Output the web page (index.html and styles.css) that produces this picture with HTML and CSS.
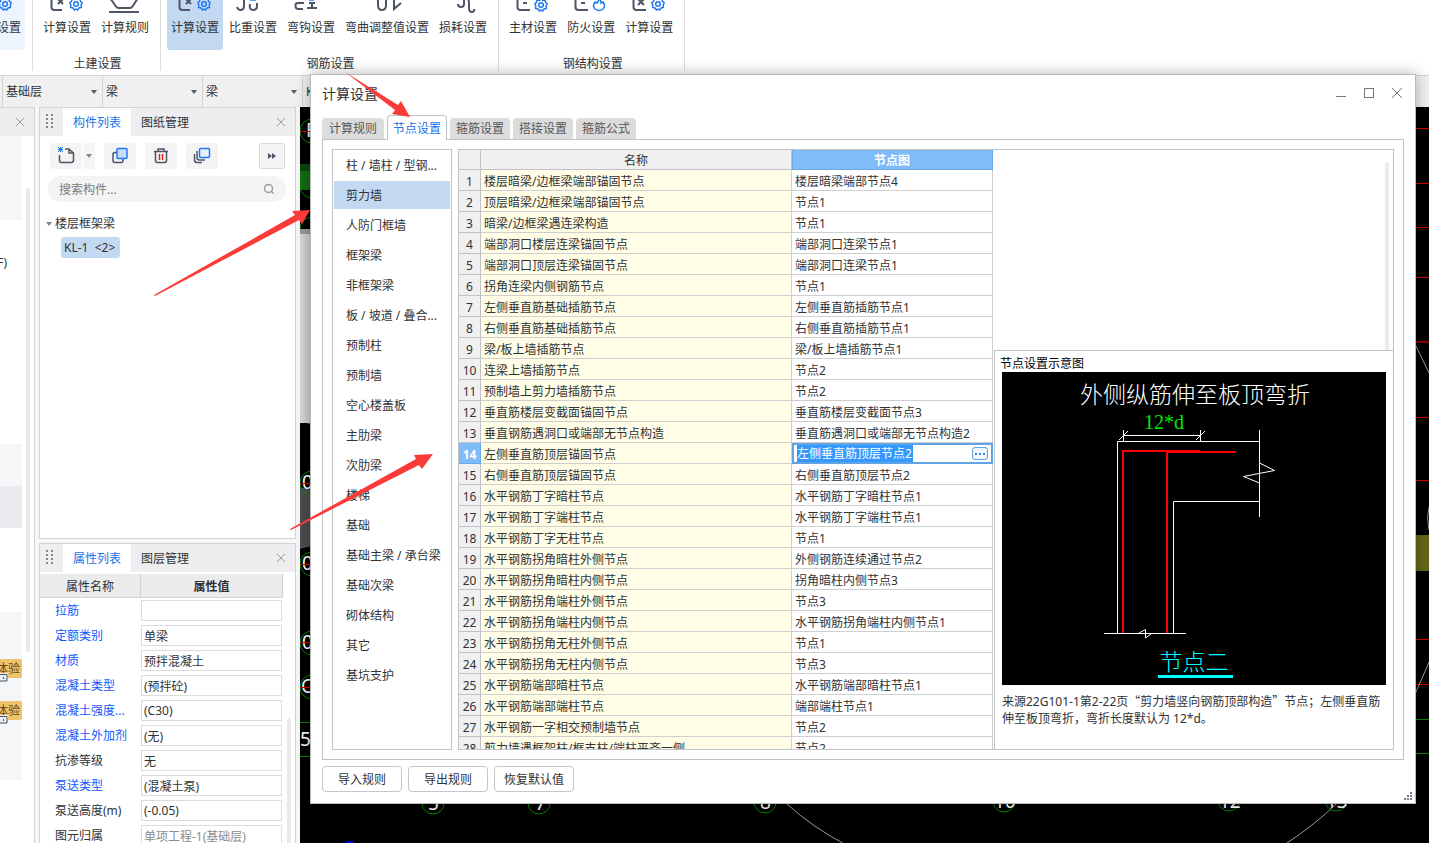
FILE: index.html
```html
<!DOCTYPE html>
<html lang="zh-CN">
<head>
<meta charset="utf-8">
<title>计算设置</title>
<link rel="stylesheet" href="styles.css">
</head>
<body>
<svg class="defs" aria-hidden="true">
  <defs>
    <g id="gear">
      <path d="M0-6 L1.6-4.6 L4-5 L4.5-2.6 L6.2-1 L5.2 1 L5.4 3.4 L3 4 L1.6 6 L0 5.2 L-1.6 6 L-3 4 L-5.4 3.4 L-5.2 1 L-6.2-1 L-4.5-2.6 L-4-5 L-1.6-4.6Z"/>
      <circle r="2.3"/>
    </g>
  </defs>
</svg>

<header class="ribbon">
  <section class="group group-cut">
    <div class="tools">
      <button class="tool tool-cut"><svg class="tool-icon" width="48" height="14"><use href="#gear" class="blue" x="28" y="4"/></svg><span>计算设置</span></button>
    </div>
  </section>
  <section class="group">
    <div class="tools">
      <button class="tool"><svg class="tool-icon" width="56" height="14"><path d="M12.5-2V7Q12.5 10 15.5 10H23M19 4L24-1M19-1L24 4"/><use href="#gear" class="blue" x="37" y="4"/></svg><span>计算设置</span></button>
      <button class="tool"><svg class="tool-icon" width="56" height="14"><path d="M13-2L19 6.500Q20 8 21.500 8H33Q34.500 8 35.500 6.500L41-2M12 12H42"/></svg><span>计算规则</span></button>
    </div>
    <h2 class="group-name">土建设置</h2>
  </section>
  <section class="group">
    <div class="tools">
      <button class="tool tool-on"><svg class="tool-icon" width="56" height="14"><path d="M12.500-2V7Q12.500 10 15.500 10H23M19 4L24-1M19-1L24 4"/><use href="#gear" class="blue" x="37" y="4"/></svg><span>计算设置</span></button>
      <button class="tool"><svg class="tool-icon" width="56" height="14"><path d="M12 7Q13 10 15.500 10Q19 10 19 6V-1M25 4Q24 10 28 10Q32 10 32 6V3"/><path class="blue" d="M25 0H31"/></svg><span>比重设置</span></button>
      <button class="tool"><svg class="tool-icon" width="56" height="14"><path d="M21 3H15Q12 3 12.500 6Q12.500 9 15.500 9H20M24 8H34M29 2V8M26 3H32"/><path class="blue" d="M26 0H31"/></svg><span>弯钩设置</span></button>
      <button class="tool"><svg class="tool-icon" width="92" height="14"><path d="M37-1V5Q37 10 41 10Q45 10 45 5V-1M53-1V9L60 3M53 8L58 5"/></svg><span>弯曲调整值设置</span></button>
      <button class="tool"><svg class="tool-icon" width="56" height="14"><path d="M23 4Q23 7 26 7Q29 7 29 4V-1M33-1Q34 1 34 3V8Q34 12 37 12Q39 12 39.500 9"/></svg><span>损耗设置</span></button>
    </div>
    <h2 class="group-name">钢筋设置</h2>
  </section>
  <section class="group">
    <div class="tools">
      <button class="tool"><svg class="tool-icon" width="56" height="14"><path d="M12.500-2V7Q12.500 10 15.500 10H25M18 3H22"/><use href="#gear" class="blue" x="36" y="5"/></svg><span>主材设置</span></button>
      <button class="tool"><svg class="tool-icon" width="56" height="14"><path d="M12.500-2V7Q12.500 10 15.500 10H25M18 3H22"/><path class="blue" d="M36-2Q36 1 34 3L32 2Q29 6 32 9Q36 12 40 9Q43 6 40 2L38 3Q38 0 36-2"/></svg><span>防火设置</span></button>
      <button class="tool"><svg class="tool-icon" width="56" height="14"><path d="M12.500-2V7Q12.500 10 15.500 10H25M17 5L23-1M17-1L23 5"/><use href="#gear" class="blue" x="37" y="4"/></svg><span>计算设置</span></button>
    </div>
    <h2 class="group-name">钢结构设置</h2>
  </section>
</header>

<div class="filters">
  <label class="filter"><select aria-label="楼层"><option>基础层</option></select></label>
  <label class="filter"><select aria-label="构件大类"><option>梁</option></select></label>
  <label class="filter"><select aria-label="构件类型"><option>梁</option></select></label>
  <label class="filter"><select aria-label="构件"><option>KL-1</option></select></label>
</div>

<main class="workspace">
  <aside class="nav">
    <div class="panel-head"><button class="close" aria-label="关闭"><svg width="10" height="10"><path d="M1 1L9 9M9 1L1 9"/></svg></button></div>
    <div class="nav-body">
      <div class="nav-list">
        <div class="nav-block nav-two"></div>
        <div class="nav-gap">F)</div>
        <div class="nav-block"></div>
        <div class="nav-block nav-on"></div>
        <div class="nav-space"></div>
        <div class="nav-block nav-four">
          <div class="trial"><span>体验</span><svg class="lock" width="8" height="9"><path d="M0 1.500H7V8H0"/><path d="M3.500 4V6"/></svg></div>
          <div class="trial"><span>体验</span><svg class="lock" width="8" height="9"><path d="M0 1.500H7V8H0"/><path d="M3.500 4V6"/></svg></div>
        </div>
      </div>
      <div class="nav-scroll"></div>
    </div>
  </aside>

  <div class="docks">
    <section class="panel components">
      <div class="panel-head">
        <svg class="grip" width="8" height="16"><path d="M1 0V16M6 0V16"/></svg>
        <button class="panel-tab panel-tab-on">构件列表</button>
        <button class="panel-tab">图纸管理</button>
        <button class="close" aria-label="关闭"><svg width="10" height="10"><path d="M1 1L9 9M9 1L1 9"/></svg></button>
      </div>
      <div class="toolbar">
        <div class="split">
          <button class="icon-btn" aria-label="新建"><svg width="18" height="18"><path d="M2.500 8V13.500Q2.500 15.500 4.500 15.500H14Q16.500 15.500 16.500 13V6L12 2H8M12 2V6H16"/><path class="blue spark" d="M1 0L6 5M6 0L1 5M3.500 0V5M1 2.500H6"/></svg></button>
          <button class="icon-btn icon-drop" aria-label="新建选项"><i class="caret"></i></button>
        </div>
        <button class="icon-btn" aria-label="复制"><svg width="18" height="18"><path d="M6 5.500H4Q2 5.500 2 7.500V13.500Q2 15.500 4 15.500H10Q12 15.500 12 13.500V12"/><rect class="blue tint" x="6" y="1.500" width="10" height="10" rx="1"/></svg></button>
        <button class="icon-btn" aria-label="删除"><svg width="18" height="18"><path d="M2 4.500H16M6 4V2H12V4M3.500 5V13.500Q3.500 15.500 5.500 15.500H12.500Q14.500 15.500 14.500 13.500V5"/><path class="red" d="M7.500 7V13M10.500 7V13"/></svg></button>
        <button class="icon-btn" aria-label="层间复制"><svg width="18" height="18"><path d="M4 4V10.500Q4 13 6.500 13H12M1.500 7V13Q1.500 15.500 4 15.500H9"/><rect class="blue pale" x="6.500" y="1.500" width="10" height="9" rx="1"/></svg></button>
        <button class="icon-btn icon-more" aria-label="更多"><svg width="10" height="8"><path class="solid" d="M1 1L5 4L1 7ZM5 1L9 4L5 7Z"/></svg></button>
      </div>
      <div class="search">
        <input type="text" aria-label="搜索构件" placeholder="搜索构件...">
        <svg width="12" height="12"><circle cx="5.500" cy="5.500" r="4"/><path d="M8.500 8.500L10.500 10.500"/></svg>
      </div>
      <div class="tree">
        <div class="tree-root"><i class="caret"></i><span>楼层框架梁</span></div>
        <div class="tree-leaf">KL-1&nbsp; &lt;2&gt;</div>
      </div>
    </section>

    <section class="panel props">
      <div class="panel-head">
        <svg class="grip" width="8" height="16"><path d="M1 0V16M6 0V16"/></svg>
        <button class="panel-tab panel-tab-on">属性列表</button>
        <button class="panel-tab">图层管理</button>
        <button class="close" aria-label="关闭"><svg width="10" height="10"><path d="M1 1L9 9M9 1L1 9"/></svg></button>
      </div>
      <div class="prop-body">
        <table class="prop-table">
          <thead><tr><th class="prop-key">属性名称</th><th class="prop-val">属性值</th></tr></thead>
          <tbody>
            <tr><td class="link"><label for="p1">拉筋</label></td><td><input id="p1" value=""></td></tr>
            <tr><td class="link"><label for="p2">定额类别</label></td><td><input id="p2" value="单梁"></td></tr>
            <tr><td class="link"><label for="p3">材质</label></td><td><input id="p3" value="预拌混凝土"></td></tr>
            <tr><td class="link"><label for="p4">混凝土类型</label></td><td><input id="p4" value="(预拌砼)"></td></tr>
            <tr><td class="link"><label for="p5">混凝土强度...</label></td><td><input id="p5" value="(C30)"></td></tr>
            <tr><td class="link"><label for="p6">混凝土外加剂</label></td><td><input id="p6" value="(无)"></td></tr>
            <tr><td><label for="p7">抗渗等级</label></td><td><input id="p7" value="无"></td></tr>
            <tr><td class="link"><label for="p8">泵送类型</label></td><td><input id="p8" value="(混凝土泵)"></td></tr>
            <tr><td><label for="p9">泵送高度(m)</label></td><td><input id="p9" value="(-0.05)"></td></tr>
            <tr><td><label for="p10">图元归属</label></td><td><input id="p10" class="muted" value="单项工程-1(基础层)"></td></tr>
          </tbody>
        </table>
        <div class="prop-scroll"></div>
      </div>
    </section>
  </div>

  <div class="canvas">
    <svg class="drawing" width="100%" height="100%">
      <defs><linearGradient id="steel"><stop offset="0" stop-color="#d8d8d8"/><stop offset="1" stop-color="#b0b0b0"/></linearGradient></defs>
      <rect y="57" width="40" height="26" fill="#146a14"/><rect y="57" width="40" height="7" fill="#0a470a"/>
      <g class="bubble"><circle cx="12" cy="79" r="12"/><circle cx="12" cy="122" r="12"/><circle cx="12" cy="304" r="13"/></g>
      <rect y="122" width="40" height="194" fill="url(#steel)"/><rect y="122" width="40" height="5" fill="#999"/>
      <path d="M0 381L40 391V431L0 441Z" fill="#4c4c4c"/>
      <g class="bubble">
        <circle cx="12" cy="24" r="12"/>
        <circle cx="12" cy="376" r="12"/><circle cx="12" cy="457" r="12"/><circle cx="12" cy="536" r="12"/><circle cx="12" cy="580" r="12"/>
        <circle cx="133" cy="696" r="11"/><circle cx="239" cy="696" r="11"/><circle cx="465" cy="695" r="11"/><circle cx="704" cy="694" r="11"/><circle cx="929" cy="693" r="11"/><circle cx="1036" cy="693" r="11"/>
        <path d="M0 615.500H10M0 649.500H10M1116 612.500H1200M1116 646.500H1200"/>
      </g>
      <g class="axis-text">
        <text x="2" y="382">0</text><text x="2" y="463">0</text><text x="2" y="542">0</text><text x="1" y="586">O</text><text x="0" y="639">5</text><text x="6" y="30">F</text>
        <text x="128" y="703">5</text><text x="235" y="703">7</text><text x="460" y="702">8</text><text x="694" y="701">10</text><text x="919" y="701">12</text><text x="1026" y="701">13</text>
      </g>
      <path class="axis-line" d="M0 24.500H10M0 376.500H10M0 457.500H10M0 535.500H10M0 580.500H10M1116 21.500H1200M1116 76.500H1200M1116 120.500H1200M1116 170.500H1200M1116 310.500H1200M1116 373.500H1200M1116 532.500H1200M1116 577.500H1200"/>
      <path class="axis-dark" d="M1116 235H1200"/>
      <rect x="1116" y="428" width="84" height="36" fill="#66661a"/>
      <path class="curve" d="M1116 239L1130 268M1130 553L1116 585M487 697Q512 720 548 739M1036 697Q1016 717 984 738M1129 400Q1126 411 1129 423"/>
      <path d="M46 735H54" stroke="#0000d0" stroke-width="2"/>
    </svg>
  </div>
</main>

<div class="dialog" role="dialog" aria-labelledby="dlg-title">
  <div class="title-bar">
    <h1 id="dlg-title">计算设置</h1>
    <div class="win-btns">
      <button aria-label="最小化"><svg width="12" height="12"><path d="M1 8.500H11"/></svg></button>
      <button aria-label="最大化"><svg width="12" height="12"><rect x="1.500" y="0.500" width="9" height="9"/></svg></button>
      <button aria-label="关闭"><svg width="12" height="12"><path d="M1 0L11 10M11 0L1 10"/></svg></button>
    </div>
  </div>
  <div class="tabs">
    <button class="tab tab-first">计算规则</button>
    <button class="tab tab-on">节点设置</button>
    <button class="tab">箍筋设置</button>
    <button class="tab">搭接设置</button>
    <button class="tab">箍筋公式</button>
  </div>
  <div class="pane">
    <ul class="kinds">
      <li>柱 / 墙柱 / 型钢...</li><li class="kind-on">剪力墙</li><li>人防门框墙</li><li>框架梁</li><li>非框架梁</li><li>板 / 坡道 / 叠合...</li><li>预制柱</li><li>预制墙</li><li>空心楼盖板</li><li>主肋梁</li><li>次肋梁</li><li>楼梯</li><li>基础</li><li>基础主梁 / 承台梁</li><li>基础次梁</li><li>砌体结构</li><li>其它</li><li>基坑支护</li>
    </ul>
    <div class="sheet">
      <div class="grid-wrap">
        <table class="grid">
          <thead><tr><th class="col-no"></th><th class="col-name">名称</th><th class="col-node">节点图</th></tr></thead>
          <tbody>
            <tr><th>1</th><td>楼层暗梁/边框梁端部锚固节点</td><td>楼层暗梁端部节点4</td></tr>
            <tr><th>2</th><td>顶层暗梁/边框梁端部锚固节点</td><td>节点1</td></tr>
            <tr><th>3</th><td>暗梁/边框梁遇连梁构造</td><td>节点1</td></tr>
            <tr><th>4</th><td>端部洞口楼层连梁锚固节点</td><td>端部洞口连梁节点1</td></tr>
            <tr><th>5</th><td>端部洞口顶层连梁锚固节点</td><td>端部洞口连梁节点1</td></tr>
            <tr><th>6</th><td>拐角连梁内侧钢筋节点</td><td>节点1</td></tr>
            <tr><th>7</th><td>左侧垂直筋基础插筋节点</td><td>左侧垂直筋插筋节点1</td></tr>
            <tr><th>8</th><td>右侧垂直筋基础插筋节点</td><td>右侧垂直筋插筋节点1</td></tr>
            <tr><th>9</th><td>梁/板上墙插筋节点</td><td>梁/板上墙插筋节点1</td></tr>
            <tr><th>10</th><td>连梁上墙插筋节点</td><td>节点2</td></tr>
            <tr><th>11</th><td>预制墙上剪力墙插筋节点</td><td>节点2</td></tr>
            <tr><th>12</th><td>垂直筋楼层变截面锚固节点</td><td>垂直筋楼层变截面节点3</td></tr>
            <tr><th>13</th><td>垂直钢筋遇洞口或端部无节点构造</td><td>垂直筋遇洞口或端部无节点构造2</td></tr>
            <tr class="row-on"><th>14</th><td>左侧垂直筋顶层锚固节点</td><td class="cell-edit"><div class="editor"><input aria-label="节点图" value="左侧垂直筋顶层节点2"><button aria-label="选择节点"><svg width="12" height="4"><path d="M1 1H3V3H1ZM5 1H7V3H5ZM9 1H11V3H9Z"/></svg></button></div></td></tr>
            <tr><th>15</th><td>右侧垂直筋顶层锚固节点</td><td>右侧垂直筋顶层节点2</td></tr>
            <tr><th>16</th><td>水平钢筋丁字暗柱节点</td><td>水平钢筋丁字暗柱节点1</td></tr>
            <tr><th>17</th><td>水平钢筋丁字端柱节点</td><td>水平钢筋丁字端柱节点1</td></tr>
            <tr><th>18</th><td>水平钢筋丁字无柱节点</td><td>节点1</td></tr>
            <tr><th>19</th><td>水平钢筋拐角暗柱外侧节点</td><td>外侧钢筋连续通过节点2</td></tr>
            <tr><th>20</th><td>水平钢筋拐角暗柱内侧节点</td><td>拐角暗柱内侧节点3</td></tr>
            <tr><th>21</th><td>水平钢筋拐角端柱外侧节点</td><td>节点3</td></tr>
            <tr><th>22</th><td>水平钢筋拐角端柱内侧节点</td><td>水平钢筋拐角端柱内侧节点1</td></tr>
            <tr><th>23</th><td>水平钢筋拐角无柱外侧节点</td><td>节点1</td></tr>
            <tr><th>24</th><td>水平钢筋拐角无柱内侧节点</td><td>节点3</td></tr>
            <tr><th>25</th><td>水平钢筋端部暗柱节点</td><td>水平钢筋端部暗柱节点1</td></tr>
            <tr><th>26</th><td>水平钢筋端部端柱节点</td><td>端部端柱节点1</td></tr>
            <tr><th>27</th><td>水平钢筋一字相交预制墙节点</td><td>节点2</td></tr>
            <tr><th>28</th><td>剪力墙遇框架柱/框支柱/端柱平齐一侧</td><td>节点2</td></tr>
          </tbody>
        </table>
      </div>
      <div class="side">
        <div class="side-top"><div class="side-scroll"></div></div>
        <div class="preview">
          <h3>节点设置示意图</h3>
          <svg class="diagram" viewBox="0 0 384 313">
            <rect width="384" height="313" fill="#000"/>
            <text class="d-title" x="193" y="31">外侧纵筋伸至板顶弯折</text>
            <text class="d-dim" x="162" y="57">12*d</text>
            <path class="d-white" d="M121.500 58V69M198.500 58V69M121 63.500H199M117 68L126 59M194 68L203 59M257.500 58V145M115.500 262V69.500H257M171.500 262V129.500H257M102 261.500H184M257.500 91L272.500 98.500L241.500 104.500L257.500 111M137 261L143.500 257.500V266L149 262"/>
            <path class="d-red" d="M121 261V79H198M165 261V80H234"/>
            <text class="d-name" x="192" y="298">节点二</text>
            <rect x="156" y="303" width="75" height="3" fill="#00ffff"/>
          </svg>
          <p>来源22G101-1第2-22页<span class="quote">“</span>剪力墙竖向钢筋顶部构造<span class="quote">”</span>节点；左侧垂直筋伸至板顶弯折，弯折长度默认为 12*d。</p>
        </div>
      </div>
    </div>
  </div>
  <div class="actions">
    <button>导入规则</button><button>导出规则</button><button>恢复默认值</button>
  </div>
  <svg class="resize" width="9" height="9"><path d="M6 0H8V2H6ZM3 3H5V5H3ZM6 3H8V5H6ZM0 6H2V8H0ZM3 6H5V8H3ZM6 6H8V8H6Z"/></svg>
</div>

<svg class="arrows" width="100%" height="100%" aria-hidden="true">
  <path d="M345 72L398 105L401 101L410 117L392 114L395 110Z"/>
  <path d="M154 295L155 296L299 220L302 224L310 210L292 211L295 215Z"/>
  <path d="M290 529L291 530L419 465L422 469L433 454L414 455L416 459Z"/>
</svg>
</body>
</html>
```
FILE: styles.css
```css
* { box-sizing: border-box; }
html, body { height: 100%; }
body {
  margin: 0; display: flex; flex-direction: column; position: relative; overflow: hidden;
  background: #f7f7f8; color: #303236;
  font: 12px/16px "Noto Sans", "Noto Sans CJK SC", sans-serif;
}
button, input, select { font: inherit; color: inherit; border: 0; background: none; padding: 0; margin: 0; border-radius: 0; outline: 0; }
h1, h2, h3, p, ul { margin: 0; padding: 0; font-weight: 400; list-style: none; }
svg { display: block; fill: none; stroke: #4d5566; stroke-width: 1.5; }
svg text, svg rect { stroke: none; }
.defs { position: absolute; width: 0; height: 0; }
.blue { stroke: #2278ee; }
.red { stroke: #e02020; }

.ribbon { display: flex; flex: none; height: 75px; background: #fff; }
.group { border-right: 1px solid #dcdcdc; height: 71px; padding: 0 7px 0 6px; display: flex; flex-direction: column; gap: 6px; }
.group-cut { padding: 0 7px 0 0; }
.tools { display: flex; gap: 2px; }
.tool { height: 50px; display: flex; flex-direction: column; align-items: center; gap: 6px; border-radius: 0 0 3px 3px; line-height: 16px; }
.tool span { padding: 0 4px; white-space: nowrap; }
.tool-on { background: #c2d9f1; }
.tool-cut { width: 25px; align-items: flex-end; overflow: hidden; background: #ecf4fe; }
.tool-icon { flex: none; stroke-width: 2; }
.tool-icon .blue { stroke-width: 1.5; }
.group-name { font-size: 12px; text-align: center; padding-left: 3px; }

.filters { display: flex; flex: none; height: 32px; padding-left: 2px; background: #f0f0f0; border-top: 1px solid #d4d4d4; }
.filter { width: 100px; border-left: 1px solid #d4d4d4; position: relative; display: flex; align-items: center; }
.filter::after { content: ""; position: absolute; right: 5px; top: 14px; border: 3px solid transparent; border-top: 4px solid #555b66; border-bottom: 0; }
.filter select { appearance: none; width: 100%; height: 31px; padding-left: 3px; }

.workspace { display: flex; flex: 1; min-height: 0; }
.nav { width: 35px; flex: none; background: #fff; border: 1px solid #d2d3d5; border-left: 0; border-bottom: 0; display: flex; flex-direction: column; margin-right: 4px; }
.panel-head { display: flex; align-items: center; flex: none; height: 28px; background: #eeeef0; padding-right: 9px; }
.close { margin-left: auto; width: 10px; height: 10px; }
.close svg { stroke: #999; stroke-width: 1; }
.nav-body { display: flex; flex: 1; min-height: 0; overflow: hidden; }
.nav-list { width: 22px; flex: none; }
.nav-block { height: 42px; background: #f5f6f8; }
.nav-two { height: 84px; }
.nav-gap { height: 224px; padding-top: 35px; margin-left: -3px; }
.nav-on { background: #e8eaf0; }
.nav-space { height: 84px; }
.nav-four { height: 168px; padding-top: 47px; display: flex; flex-direction: column; gap: 23px; }
.trial { position: relative; height: 19px; background: #efc36c; color: #6b4716; border-radius: 0 2px 2px 0; display: flex; justify-content: flex-end; align-items: center; }
.trial span { padding-right: 2px; white-space: nowrap; }
.lock { position: absolute; left: 0; bottom: -4px; background: #e8eef5; stroke-width: 1; }
.nav-scroll { width: 4px; height: 464px; margin: 52px 0 0 4px; border-radius: 2px; background: #e9e9e9; }

.docks { width: 257px; flex: none; display: flex; flex-direction: column; gap: 4px; margin-right: 4px; min-height: 0; }
.panel { background: #fff; border: 1px solid #d2d3d5; display: flex; flex-direction: column; min-height: 0; }
.components { flex: 432 1 0; }
.props { flex: 300 1 0; border-bottom: 0; }
.grip { flex: none; margin: 0 9px 0 6px; stroke: #85888e; stroke-width: 2; stroke-dasharray: 2 2; }
.panel-tab { height: 28px; padding: 2px 10px 0; }
.panel-tab-on { background: #fff; color: #1a73e8; }
.toolbar { display: flex; gap: 9px; padding: 7px 10px 0; }
.split { display: flex; gap: 1px; }
.icon-btn { width: 32px; height: 26px; border-radius: 3px; background: #f4f4f5; display: flex; align-items: center; justify-content: center; }
.icon-drop { width: 12px; }
.icon-more { width: 26px; border: 1px solid #d9d9db; margin-left: auto; }
.spark { stroke-width: 1; }
.tint { fill: #c9ddfa; }
.pale { fill: #e6f1ff; }
svg rect.tint, svg rect.pale { stroke: #2278ee; }
.solid { fill: #4d5566; stroke: none; }
.caret { border: 3px solid transparent; border-top: 4px solid #84878c; border-bottom: 0; }
.search { display: flex; align-items: center; height: 26px; margin: 7px 9px 0 8px; padding: 0 11px; border-radius: 13px; background: #f4f4f4; }
.search input { flex: 1; min-width: 0; padding-top: 2px; }
.search input::placeholder { color: #7b7b7b; opacity: 1; }
.search svg { stroke: #999; stroke-width: 1.5; }
.tree { padding: 14px 6px; }
.tree-root { display: flex; align-items: center; gap: 3px; }
.tree-leaf { display: inline-block; margin: 5px 0 0 15px; padding: 3px 5px 2px 3px; border-radius: 3px; background: #c2d9f1; white-space: nowrap; }

.prop-body { display: flex; flex: 1; min-height: 0; overflow: hidden; padding-top: 2px; }
.prop-table { width: 243px; flex: none; border-spacing: 0; table-layout: fixed; align-self: flex-start; }
.prop-table th { height: 24px; padding: 2px 0 0; background: #ebebeb; border: solid #d3d3d3; border-width: 0 1px 1px 0; font-weight: 400; }
.prop-table .prop-val { font-weight: 700; }
.prop-key { width: 101px; }
.prop-table td { height: 25px; padding: 0 1px 0 0; white-space: nowrap; }
.prop-table td:first-child { padding-left: 15px; }
.prop-table .link { color: #1258ff; }
.prop-table input { width: 100%; height: 21px; border: 1px solid #dcdcdc; padding: 0 2px; display: block; }
.prop-table .muted { color: #8c8c8c; }
.prop-scroll { width: 4px; height: 400px; margin: 144px 0 0 4px; border-radius: 2px; background: #e9e9e9; }

.canvas { flex: 1; min-width: 0; background: #000; overflow: hidden; }
.bubble { stroke: #008a00; stroke-width: 1; }
.axis-text text { fill: #fff; font-size: 19px; }
.axis-line { stroke: #d40000; stroke-width: 1; }
.axis-dark { stroke: #8a0000; stroke-width: 2; }
.curve { stroke: #999; stroke-width: 1; }

.dialog { position: absolute; left: 310px; top: 74px; right: 13px; bottom: 39px; display: flex; flex-direction: column; padding: 0 11px 11px; background: #fff; border: 1px solid #b9b9b9; box-shadow: 0 0 14px rgba(0, 0, 0, .3); }
.title-bar { display: flex; flex: none; height: 38px; align-items: center; justify-content: space-between; }
.title-bar h1 { font-size: 14px; line-height: 20px; }
.win-btns { display: flex; gap: 16px; padding-right: 1px; }
.win-btns button { width: 12px; height: 12px; }
.win-btns svg, .win-btns svg rect { stroke: #777; stroke-width: 1; }
.tabs { display: flex; flex: none; height: 26px; align-items: flex-end; gap: 3px; }
.tab { width: 60px; height: 21px; padding-top: 1px; background: #dcdcdc; color: #55585d; border-radius: 4px 4px 0 0; }
.tab-first { width: 62px; }
.tab-on { position: relative; height: 25px; margin-bottom: -1px; background: #fff; color: #1a73e8; border: 1px solid #bfc2c6; border-bottom: 0; }
.pane { flex: 1; min-height: 0; display: flex; gap: 6px; padding: 9px; border: 1px solid #bfc2c6; }
.kinds { width: 120px; flex: none; border: 1px solid #bfc2c6; padding: 1px; overflow: hidden; display: flex; flex-direction: column; gap: 2px; }
.kinds li { flex: none; height: 28px; padding-left: 12px; line-height: 30px; white-space: nowrap; }
.kind-on { background: #c2d9f1; }
.sheet { flex: 1; min-width: 0; border: 1px solid #bfc2c6; display: flex; overflow: hidden; }
.grid-wrap { flex: none; overflow: hidden; }
.grid { width: 534px; border-spacing: 0; table-layout: fixed; line-height: 17px; }
.grid th, .grid td { border: solid #cfcfcf; border-width: 0 1px 1px 0; font-weight: 400; white-space: nowrap; overflow: hidden; }
.grid th { background: #f0f0f0; border-color: #bfc2c6; padding: 2px 0 0; text-align: center; }
.grid thead th { height: 20px; }
.grid tbody th, .grid td { height: 21px; }
.grid td { padding: 2px 3px 0; }
.grid td:nth-child(2) { background: #fffde5; }
.col-no { width: 22px; }
.col-node { width: 201px; }
.grid .col-node { background: #80bbfa; color: #fff; font-weight: 700; border-color: #69a9ea; box-shadow: inset 1px 0 #69a9ea; }
.grid .row-on th { background: #80bbfa; color: #fff; font-weight: 700; border-color: #69a9ea; }
.grid .cell-edit { padding: 0; border: 0; }
.editor { display: flex; align-items: center; justify-content: space-between; height: 21px; border: 2px solid #62a3e6; padding: 0 3px; }
.editor input { width: 116px; height: 17px; background: #3399ff; color: #fff; line-height: 17px; }
.editor button { width: 16px; height: 13px; border: 1px solid #62a3e6; border-radius: 3px; background: #eff6fe; display: flex; align-items: center; justify-content: center; }
.editor svg { fill: #3a8ee6; stroke: none; }
.side { flex: 1; min-width: 0; display: flex; flex-direction: column; padding-left: 1px; }
.side-top { flex: 1; min-height: 0; padding: 12px 4px 0; display: flex; justify-content: flex-end; }
.side-scroll { width: 4px; border-radius: 2px 2px 0 0; background: #ebebeb; }
.preview { flex: none; height: 399px; padding: 5px 7px; border: solid #bfc2c6; border-width: 1px 0 0 1px; }
.preview h3 { font-size: 12px; line-height: 16px; color: #000; margin-left: -2px; }
.diagram { width: 100%; }
.preview p { margin-top: 7px; margin-right: -4px; line-height: 17px; }
.quote { font-family: "Noto Sans CJK SC", sans-serif; }
.d-title, .d-name { font: 300 23px "Noto Sans CJK SC", sans-serif; text-anchor: middle; fill: #fff; }
.d-name { fill: #00ffff; }
.d-dim { font: 20px "Liberation Serif", serif; text-anchor: middle; fill: #00e600; }
.d-white { stroke: #fff; stroke-width: 1; }
.d-red { stroke: #ff0000; stroke-width: 2; }
.actions { display: flex; flex: none; gap: 6px; margin-top: 6px; }
.actions button { width: 80px; height: 26px; padding-top: 2px; border: 1px solid #c4c6ca; border-radius: 4px; background: #fff; }
.resize { position: absolute; right: 2px; bottom: 2px; fill: #777d88; stroke: none; }
.arrows { position: absolute; left: 0; top: 0; pointer-events: none; fill: #fb3a3a; stroke: none; }
```
